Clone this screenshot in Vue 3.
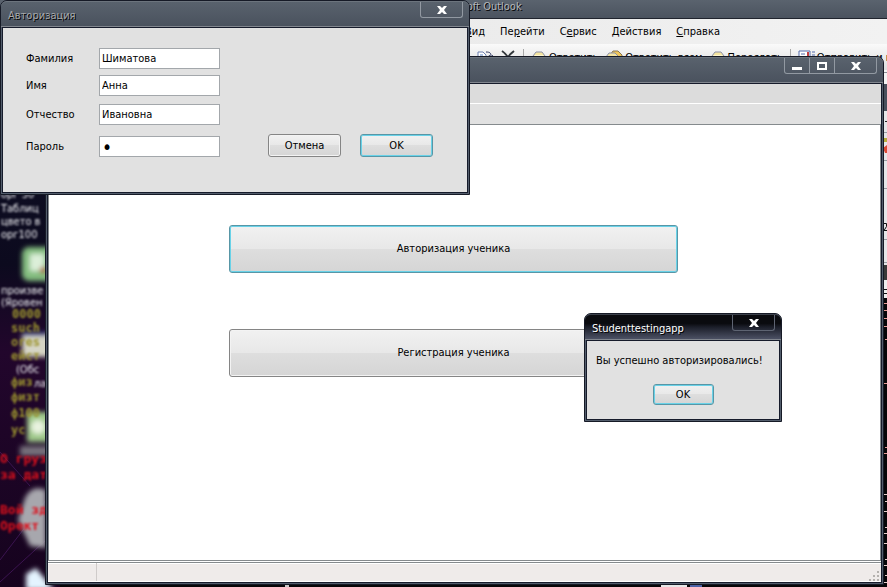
<script setup>
import { ref } from 'vue'

const fields = ref([
  { id: 'surname', label: 'Фамилия', type: 'text', value: 'Шиматова' },
  { id: 'name', label: 'Имя', type: 'text', value: 'Анна' },
  { id: 'patronymic', label: 'Отчество', type: 'text', value: 'Ивановна' },
  { id: 'password', label: 'Пароль', type: 'password', value: '1' }
])
</script>

<template>
  <div class="desktop">
    <svg class="shortcuts" width="60" height="587" viewBox="0 0 60 587">
      <defs>
        <filter id="soft"><feGaussianBlur stdDeviation="1 1.3" /></filter>
        <filter id="softer"><feGaussianBlur stdDeviation="2.4" /></filter>
        <linearGradient id="wall" x1="0" y1="0" x2="0" y2="1">
          <stop offset="0" stop-color="#101429" />
          <stop offset="0.45" stop-color="#0c0a1e" />
          <stop offset="0.6" stop-color="#22062c" />
          <stop offset="1" stop-color="#16031e" />
        </linearGradient>
      </defs>
      <rect width="60" height="587" fill="url(#wall)" />
      <path d="M0 452 30 486M0 560 46 500M0 582 46 540" stroke="#3b1450" fill="none" />
      <g filter="url(#softer)">
        <rect x="22" y="247" width="34" height="34" rx="7" fill="#83bd7f" />
        <rect x="30" y="254" width="14" height="17" fill="#dcefd9" />
        <circle cx="43" cy="270" r="3" fill="#b04a28" />
        <rect x="22" y="333" width="30" height="24" fill="#d5d4c5" />
        <path d="M22 334h26" stroke="#35468b" stroke-width="4" />
        <rect x="27" y="412" width="28" height="30" fill="#9fc98a" />
        <circle cx="38" cy="427" r="7" fill="#e9f3e0" />
        <path d="M20 446h30v10H20z" fill="#77717c" />
        <path d="M25 498Q32 484 46 490V548L30 546 18 520Z" fill="#a7a7ad" />
        <path d="M26 590V574L36 568 54 590Z" fill="#e4f4ff" />
      </g>
      <g class="caption" filter="url(#soft)">
        <text x="1" y="198">орг 30</text>
        <text x="1" y="212">Таблиц</text>
        <text x="1" y="225">цвето в</text>
        <text x="1" y="238">орг100</text>
        <text x="1" y="294">произве</text>
        <text x="1" y="306">(Яровен</text>
        <text x="16" y="373">(Обс</text>
        <text x="34" y="387">ла</text>
      </g>
      <g class="olive" filter="url(#soft)">
        <text x="12" y="318">0000</text>
        <text x="11" y="332">such</text>
        <text x="11" y="346">ores</text>
        <text x="11" y="360">ейст</text>
        <text x="11" y="386">физ</text>
        <text x="11" y="401">физт</text>
        <text x="11" y="417">ф100</text>
        <text x="11" y="434">ус</text>
      </g>
      <g class="red">
        <text x="0" y="463">О груз</text>
        <text x="0" y="479">за дат</text>
        <text x="0" y="514">Вой зд</text>
        <text x="0" y="530">Орект</text>
      </g>
    </svg>

    <section class="outlook">
      <header class="outlook-title"><span>Microsoft Outlook</span></header>
      <nav class="menu">
        <a href="#"><u>В</u>ид</a>
        <a href="#">Пе<u>р</u>ейти</a>
        <a href="#">С<u>е</u>рвис</a>
        <a href="#"><u>Д</u>ействия</a>
        <a href="#"><u>С</u>правка</a>
      </nav>
      <div class="tools">
        <button class="tool" aria-label="Переместить">
          <svg width="16" height="16" viewBox="0 0 16 16">
            <path d="M1 2h5l3 3v9H1z" fill="#fff" stroke="#6b7fae" />
            <path d="M3 5h3M3 7h4" stroke="#5c84c4" />
            <path d="M9 2c4 0 5 1 5 4M12 5l2 3 2-3" fill="none" stroke="#2c3560" />
          </svg>
        </button>
        <button class="tool" aria-label="Удалить">
          <svg width="16" height="16" viewBox="0 0 16 16"><path d="M2 1c3 2 7 7 10 12M14 1C10 4 6 9 3 14" fill="none" stroke="#33383c" stroke-width="2" /></svg>
        </button>
        <i class="rule"></i>
        <button class="tool">
          <svg width="16" height="16" viewBox="0 0 16 16">
            <path d="M2 6 5 2h6l3 4v7H2z" fill="#f5e5a0" stroke="#8b91a9" />
            <path d="M3 5h10l-5 4z" fill="#fdf6d0" /><path d="M3 8l4-2 6 3v4H3z" fill="#e8bc48" />
          </svg>
          Ответить
        </button>
        <button class="tool">
          <svg width="18" height="16" viewBox="0 0 18 16">
            <path d="M5 5 8 1h5l4 4v7H6z" fill="#eec65b" stroke="#8b7750" />
            <path d="M1 7 4 3h6l4 4v7H1z" fill="#f5e5a0" stroke="#8b91a9" />
            <path d="M3 6h9l-5 3z" fill="#fdf6d0" />
          </svg>
          Ответить всем
        </button>
        <button class="tool">
          <svg width="16" height="16" viewBox="0 0 16 16">
            <path d="M2 6 5 2h6l3 4v7H2z" fill="#f5e5a0" stroke="#8b91a9" />
            <path d="M3 5h10l-5 4z" fill="#fdf6d0" /><path d="M3 8l4-2 6 3v4H3z" fill="#e8bc48" />
          </svg>
          Переслать
        </button>
        <i class="rule"></i>
        <button class="tool">
          <svg width="17" height="16" viewBox="0 0 17 16">
            <path d="M1 1h11v12H1z" fill="#fff" stroke="#526aaa" />
            <path d="M3 4h4M3 7h5M14 2h3M14 5h3M14 8h3" stroke="#526aaa" />
            <path d="M9 2h2v4H9z" fill="#c43e3e" />
          </svg>
          Отправить и п
        </button>
      </div>
    </section>

    <svg class="edge" width="8" height="517" viewBox="0 0 8 517">
      <rect width="8" height="517" fill="#060608" />
      <rect width="8" height="14" fill="#f4f4f4" />
      <path d="M0 2.500h8" stroke="#8a8d94" />
      <rect y="14" width="8" height="27" fill="#48505d" />
      <rect y="41" width="8" height="154" fill="#e6e6e8" />
      <path d="M6 51.500h2" stroke="#222" />
      <path d="M4 68h4v4H4z" fill="#b8ad3c" /><path d="M4 78l4-3v8H6z" fill="#dd4a35" />
      <path d="M0 62.500h8M0 90.500h8M0 118.500h8M0 169.500h8M0 192.500h8" stroke="#999ca2" />
      <path d="M5 153.500h2.500v3L5 160.500h3" fill="none" stroke="#111" />
      <rect y="195" width="8" height="15" fill="#393939" />
      <rect y="210" width="8" height="18" fill="#eee" />
      <path d="M5 219.500h3M5 223.500h3" stroke="#111" />
      <path d="M5 233.500h3M5 240.500h3M5 248.500h3M5 256.500h3M6 269.500h2M5 313.500h3M6 377.500h2M5 383.500h3" stroke="#e79c96" />
      <path d="M5 424.500h3M6 431.500h2M5 441.500h3M6 457.500h2M5 463.500h3M5 473.500h3M6 489.500h2M5 495.500h3M6 505.500h2M5 512.500h3" stroke="#e6cfcc" />
    </svg>
    <div class="taskbar"><i class="tab"></i><i class="tab blue"></i></div>

    <main class="window main-window">
      <header class="titlebar">
        <div class="controls">
          <button class="ctl small" aria-label="Свернуть"><svg width="12" height="10" viewBox="0 0 12 10"><path d="M1 6h10v3H1z" fill="#fff" /></svg></button>
          <button class="ctl small" aria-label="Развернуть"><svg width="12" height="10" viewBox="0 0 12 10"><path d="M2 2h8v6H2z" fill="none" stroke="#fff" stroke-width="2" /></svg></button>
          <button class="ctl" aria-label="Закрыть"><svg width="12" height="10" viewBox="0 0 12 10"><path d="M1 1h3l2 2 2-2h3L8 5l3 4H8L6 7 4 9H1l3-4z" fill="#fff" /></svg></button>
        </div>
      </header>
      <div class="body app">
        <div class="strip first"></div>
        <div class="strip second"></div>
        <div class="canvas">
          <button class="btn big default">Авторизация ученика</button>
          <button class="btn big">Регистрация ученика</button>
        </div>
        <footer class="status">
          <span class="cell"></span>
          <svg class="grip" width="12" height="12" viewBox="0 0 12 12">
            <path d="M8 2h2v2H8zM8 6h2v2H8zM8 10h2v2H8zM4 6h2v2H4zM4 10h2v2H4zM0 10h2v2H0z" fill="#b4b1ae" />
          </svg>
        </footer>
      </div>
    </main>

    <section class="window login" role="dialog" aria-labelledby="login-title">
      <header class="titlebar">
        <h1 id="login-title" class="dim">Авторизация</h1>
        <div class="controls">
          <button class="ctl" aria-label="Закрыть"><svg width="12" height="10" viewBox="0 0 12 10"><path d="M1 1h3l2 2 2-2h3L8 5l3 4H8L6 7 4 9H1l3-4z" fill="#fff" /></svg></button>
        </div>
      </header>
      <form class="body form" @submit.prevent>
        <div class="fields">
          <template v-for="f in fields" :key="f.id">
            <label :for="f.id">{{ f.label }}</label>
            <input :id="f.id" v-model="f.value" :type="f.type" autocomplete="off" />
          </template>
        </div>
        <div class="actions">
          <button type="button" class="btn">Отмена</button>
          <button type="submit" class="btn default">OK</button>
        </div>
      </form>
    </section>

    <section class="window alert" role="alertdialog" aria-labelledby="alert-title">
      <header class="titlebar active">
        <h1 id="alert-title">Studenttestingapp</h1>
        <div class="controls">
          <button class="ctl" aria-label="Закрыть"><svg width="12" height="10" viewBox="0 0 12 10"><path d="M1 1h3l2 2 2-2h3L8 5l3 4H8L6 7 4 9H1l3-4z" fill="#fff" /></svg></button>
        </div>
      </header>
      <div class="body message">
        <p>Вы успешно авторизировались!</p>
        <button class="btn default compact">OK</button>
      </div>
    </section>
  </div>
</template>

<style>
body {
  margin: 0;
  background: #060608;
}
</style>

<style scoped>
* {
  box-sizing: border-box;
}

.desktop {
  position: relative;
  height: 100vh;
  min-height: 450px;
  overflow: hidden;
  background: #060608;
  color: #000;
  font: 11px/14px "DejaVu Sans Condensed", Tahoma, "Noto Sans", sans-serif;
}

button,
input {
  font: inherit;
  color: inherit;
  margin: 0;
}

.shortcuts {
  position: absolute;
  left: 0;
  top: 0;
}

.caption {
  fill: #f0f0f4;
  font-size: 11px;
}

.olive {
  fill: #9c942f;
  font: bold 12px "DejaVu Sans Mono", monospace;
}

.red {
  fill: #dd101c;
  font: bold 13px "DejaVu Sans Mono", monospace;
  filter: blur(1px);
}

.outlook {
  position: absolute;
  left: 0;
  right: 0;
  top: 0;
  height: 72px;
  background: #f2f2f2;
}

.outlook-title {
  height: 19px;
  padding-left: 435px;
  background: linear-gradient(#5a636e, #4b535f);
  border-bottom: 1px solid #20242e;
  color: #b4b6ba;
  text-shadow: 1px 1px 0 #000;
}

.menu {
  display: flex;
  gap: 15px;
  height: 25px;
  padding: 6px 0 0 465px;
  background: linear-gradient(90deg, #e4e4e4, #f2f2f2);
  white-space: nowrap;
}

.menu a {
  color: #000;
  text-decoration: none;
}

.tools {
  display: flex;
  align-items: center;
  gap: 7px;
  height: 28px;
  padding-left: 477px;
  background: linear-gradient(#fafafa, #dcdcdc);
  overflow: hidden;
}

.tool {
  display: flex;
  flex: none;
  align-items: center;
  gap: 2px;
  padding: 0;
  border: 0;
  background: none;
  white-space: nowrap;
}

.rule {
  flex: none;
  width: 1px;
  height: 18px;
  background: #a8a8a8;
}

.edge {
  position: absolute;
  right: 0;
  top: 70px;
}

.taskbar {
  position: absolute;
  left: 285px;
  right: 0;
  bottom: 0;
  display: flex;
  align-items: flex-end;
  gap: 3px;
  height: 2px;
  padding-left: 372px;
  border-left: 4px solid #c9c9c9;
  background: #060608;
}

.tab {
  width: 26px;
  height: 2px;
  background: #e8e8e8;
}

.blue {
  width: 12px;
  background: #4d63a8;
}

.window {
  position: absolute;
  display: flex;
  flex-direction: column;
  padding: 0 1px 1px;
  border: 1px solid #161a26;
  border-radius: 7px 7px 0 0;
  background: #535d6c;
}

.main-window {
  left: 45px;
  right: 3px;
  top: 56px;
  bottom: 2px;
}

.login {
  left: 0;
  top: 0;
  width: 470px;
}

.alert {
  left: 584px;
  top: 313px;
  width: 198px;
}

.titlebar {
  display: flex;
  flex: none;
  justify-content: space-between;
  height: 26px;
  margin: 0 -1px;
  padding: 0 6px;
  border-top: 1px solid #6c747d;
  border-bottom: 1px solid #81868e;
  border-radius: 6px 6px 0 0;
  background: linear-gradient(#59626d, #4a525e);
}

.active {
  border-top-color: #3c414b;
  background: linear-gradient(#0a0b0f 0 35%, #1b1e29 50%, #4c5164);
}

.titlebar h1 {
  margin: 0;
  padding: 7px 0 0 1px;
  font: inherit;
  color: #fff;
  text-shadow: 1px 1px 0 #000;
}

.titlebar .dim {
  color: #a5a8ac;
}

.controls {
  display: flex;
  height: 16px;
  margin-left: auto;
  border: 1px solid #9299a2;
  border-top: 0;
  border-radius: 0 0 3px 3px;
}

.active .controls {
  border-color: #5e6472;
}

.ctl {
  display: flex;
  align-items: center;
  justify-content: center;
  width: 41px;
  padding: 0;
  border: 0;
  background: transparent;
}

.small {
  width: 25px;
  border-right: 1px solid #9299a2;
}

.body {
  border: 1px solid #161b2b;
  background: #e1e1e1;
}

.btn {
  width: 73px;
  height: 23px;
  padding: 0;
  border: 1px solid #858585;
  border-radius: 3px;
  background: linear-gradient(#f1f1f1, #e8e8e8 49%, #dedede 50%, #d5d5d5);
  box-shadow: inset 0 0 0 1px #f3f3f3;
}

.default {
  border-color: #5896a6;
  box-shadow: inset 0 0 0 1px #69d2e8;
}

.form {
  display: flex;
  align-items: flex-end;
  gap: 48px;
  padding: 20px 33px 35px 23px;
}

.fields {
  display: grid;
  grid-template-columns: 73px 121px;
  grid-template-rows: 27px 29px 32px 21px;
}

.fields label {
  padding-top: 4px;
}

.fields input {
  width: 100%;
  height: 21px;
  padding: 0 2px;
  border: 1px solid #a3a7ab;
  background: #fff;
  outline: 0;
}

.fields input[type="password"] {
  font-size: 19px;
}

.actions {
  display: flex;
  flex: 1;
  gap: 19px;
}

.app {
  display: flex;
  flex: 1;
  flex-direction: column;
}

.strip {
  flex: none;
  height: 20px;
}

.first {
  border-bottom: 1px solid #fff;
  background: #dcdcdc;
}

.canvas {
  display: flex;
  flex: 1;
  flex-direction: column;
  gap: 56px;
  padding: 100px 202px 0 180px;
  border: 1px solid #858a8d;
  background: #fff;
}

.big {
  flex: none;
  width: 100%;
  height: 48px;
}

.status {
  display: flex;
  flex: none;
  align-items: stretch;
  justify-content: space-between;
  height: 20px;
  margin-top: 1px;
  border-top: 1px solid #858a8d;
  border-bottom: 1px solid #fff;
  background: #efebea;
  box-shadow: inset 0 1px 0 #fff, 0 -1px 0 #fff;
}

.cell {
  width: 49px;
  border-right: 1px solid #cfcbca;
}

.grip {
  align-self: flex-end;
}

.message {
  display: flex;
  flex-direction: column;
  align-items: center;
  gap: 16px;
  padding: 13px 0 14px;
}

.message p {
  margin: 0;
  align-self: flex-start;
  padding-left: 9px;
  white-space: nowrap;
}

.compact {
  width: 61px;
  height: 21px;
}
</style>
